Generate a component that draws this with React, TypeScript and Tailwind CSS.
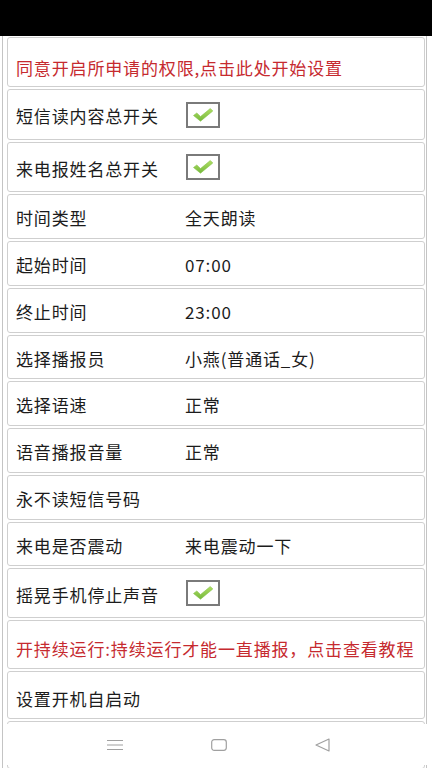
import clsx from "clsx";

interface Row {
  label: string;
  value?: string;
  check?: boolean;
  red?: boolean;
  h: string;
  pt: string;
}

const rows: Row[] = [
  { label: "同意开启所申请的权限,点击此处开始设置", red: true, h: "h-[50px]", pt: "pt-[12px]" },
  { label: "短信读内容总开关", check: true, h: "h-[51px]", pt: "pt-[3px]" },
  { label: "来电报姓名总开关", check: true, h: "h-[50px]", pt: "pt-[3px]" },
  { label: "时间类型", value: "全天朗读", h: "h-[45px]", pt: "pt-[3px]" },
  { label: "起始时间", value: "07:00", h: "h-[45px]", pt: "pt-[3px]" },
  { label: "终止时间", value: "23:00", h: "h-[45px]", pt: "pt-[3px]" },
  { label: "选择播报员", value: "小燕(普通话_女)", h: "h-[44px]", pt: "pt-[3px]" },
  { label: "选择语速", value: "正常", h: "h-[45px]", pt: "pt-[3px]" },
  { label: "语音播报音量", value: "正常", h: "h-[45px]", pt: "pt-[3px]" },
  { label: "永不读短信号码", h: "h-[45px]", pt: "pt-[3px]" },
  { label: "来电是否震动", value: "来电震动一下", h: "h-[44px]", pt: "pt-[3px]" },
  { label: "摇晃手机停止声音", check: true, h: "h-[50px]", pt: "pt-[3px]" },
  { label: "开持续运行:持续运行才能一直播报，点击查看教程", red: true, h: "h-[49px]", pt: "pt-[9px]" },
  { label: "设置开机自启动", h: "h-[48px]", pt: "pt-[7px]" },
  { label: "", h: "h-[48px]", pt: "pt-[3px]" },
];

function CheckBox() {
  return (
    <div className="w-[34px] h-[26px] border-2 border-[#7a7a7a] bg-white flex items-center justify-center">
      <svg width="22" height="16" viewBox="0 0 22 16">
        <defs>
          <linearGradient id="chk" x1="0" y1="0" x2="0" y2="1">
            <stop offset="0" stopColor="#b0de62" />
            <stop offset="1" stopColor="#74b83c" />
          </linearGradient>
        </defs>
        <path
          d="M1.5 8.5 L4.8 6 L8.5 9.6 L18.3 1.5 L20.8 4 L8.5 14.2 Z"
          fill="url(#chk)"
          stroke="#84c24a"
          strokeWidth="0.6"
          strokeLinejoin="round"
        />
      </svg>
    </div>
  );
}

export default function App() {
  return (
    <div
      className="w-[432px] h-[768px] bg-black relative overflow-hidden"
      style={{ fontFamily: '"Noto Sans CJK SC", "Noto Sans", sans-serif' }}
    >
      <div className="h-[36px]" />
      <div className="bg-white h-[732px] pl-[2px]">
        <div className="w-[425px] h-full border-x border-[#c4c4c4] pl-[4px] pt-[1px] flex flex-col gap-[2px]">
          {rows.map((row, i) => (
            <div
              key={i}
              className={clsx(
                "w-[418px] shrink-0 border border-[#cfcfcf] rounded-[3px] bg-white flex items-center pl-[8px] whitespace-nowrap text-[17px] tracking-[0.85px]",
                row.h,
                row.pt,
                row.red ? "text-[#c62a2f]" : "text-[#1c1c1c]"
              )}
            >
              <span className="w-[169px] shrink-0">{row.label}</span>
              {row.value && <span>{row.value}</span>}
              {row.check && (
                <div className="ml-[1px] -mt-[3px]">
                  <CheckBox />
                </div>
              )}
            </div>
          ))}
        </div>
      </div>

      {/* system nav bar */}
      <div className="absolute left-[6px] top-[724px] w-[421px] h-[41px] bg-white flex items-center pl-[101px] gap-[88px]">
        <svg width="16" height="12" viewBox="0 0 16 12">
          <path d="M0 1.5 H16 M0 6 H16 M0 10.5 H16" stroke="#a0a0a0" strokeWidth="1.2" />
        </svg>
        <svg width="16" height="12" viewBox="0 0 16 12">
          <rect x="0.7" y="0.7" width="14.6" height="10.6" rx="2.5" fill="none" stroke="#a0a0a0" strokeWidth="1.2" />
        </svg>
        <svg width="15" height="14" viewBox="0 0 15 14">
          <path d="M14 1 V13 L1 7 Z" fill="none" stroke="#a0a0a0" strokeWidth="1.2" strokeLinejoin="round" />
        </svg>
      </div>
    </div>
  );
}
